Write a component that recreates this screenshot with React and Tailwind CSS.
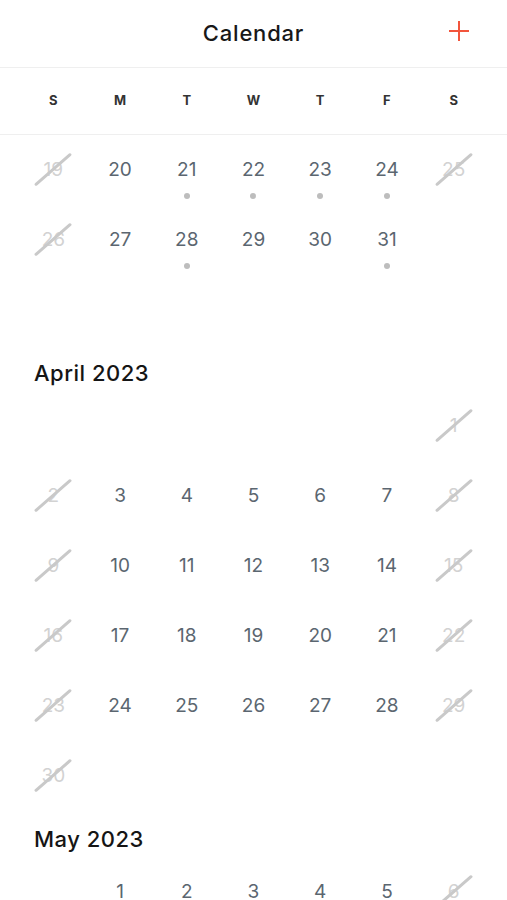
const WEEKDAYS = ["S", "M", "T", "W", "T", "F", "S"];

// null = empty cell, dot = has events
const MONTHS = [
  {
    title: null,
    rows: [
      [19, 20, 21, 22, 23, 24, 25],
      [26, 27, 28, 29, 30, 31, null],
      [null, null, null, null, null, null, null],
    ],
    dots: [21, 22, 23, 24, 28, 31],
  },
  {
    title: "April 2023",
    rows: [
      [null, null, null, null, null, null, 1],
      [2, 3, 4, 5, 6, 7, 8],
      [9, 10, 11, 12, 13, 14, 15],
      [16, 17, 18, 19, 20, 21, 22],
      [23, 24, 25, 26, 27, 28, 29],
      [30, null, null, null, null, null, null],
    ],
    dots: [],
  },
  {
    title: "May 2023",
    rows: [[null, 1, 2, 3, 4, 5, 6]],
    dots: [],
  },
];

const heading = { fontFamily: "Inter, 'Noto Sans', sans-serif" };

function DayCell({ day, weekend, dot }) {
  if (day === null) return <div className="h-[70px]" />;
  return (
    <div className="relative flex h-[70px] flex-col items-center pt-[23px]">
      <span
        className={`text-[19px] leading-[24px] ${weekend ? "text-[#d2d2d2]" : "text-[#5b6670]"}`}
      >
        {day}
      </span>
      {weekend && (
        <span className="absolute left-1/2 top-[33px] h-[3px] w-[48px] -translate-x-1/2 -rotate-[41deg] rounded-full bg-[#c9c9c9]" />
      )}
      {dot && <span className="mt-[11px] h-[6px] w-[6px] rounded-full bg-[#bdbdbd]" />}
    </div>
  );
}

function Month({ month }) {
  return (
    <section>
      {month.title && (
        <h2
          className="px-[34px] pb-[4px] pt-[14px] text-[22px] font-[450] leading-[28px] tracking-[0.5px] text-[#151515]"
          style={heading}
        >
          {month.title}
        </h2>
      )}
      <div className="grid grid-cols-7 px-[20px]">
        {month.rows.flatMap((row, r) =>
          row.map((day, i) => (
            <DayCell
              key={`${r}-${i}`}
              day={day}
              weekend={i === 0 || i === 6}
              dot={month.dots.includes(day)}
            />
          ))
        )}
      </div>
    </section>
  );
}

export default function App() {
  return (
    <div className="h-[900px] w-[507px] overflow-hidden bg-white" style={{ fontFamily: "Inter, sans-serif" }}>
      <header className="relative flex h-[68px] items-center justify-center border-b border-[#efefef]">
        <h1 className="text-[22px] font-[450] tracking-[0.8px] text-[#181818]" style={heading}>
          Calendar
        </h1>
        <button type="button" className="absolute right-[38px] top-[21px] h-[20px] w-[20px]">
          <svg viewBox="0 0 20 20" className="h-[20px] w-[20px]">
            <path d="M10 0v20M0 10h20" stroke="#f2553c" strokeWidth="2" />
          </svg>
        </button>
      </header>
      <div className="grid h-[67px] grid-cols-7 items-center border-b border-[#efefef] px-[20px]">
        {WEEKDAYS.map((d, i) => (
          <span key={i} className="text-center text-[13px] font-bold text-[#333]" style={heading}>
            {d}
          </span>
        ))}
      </div>
      {MONTHS.map((m, i) => (
        <Month key={i} month={m} />
      ))}
    </div>
  );
}
